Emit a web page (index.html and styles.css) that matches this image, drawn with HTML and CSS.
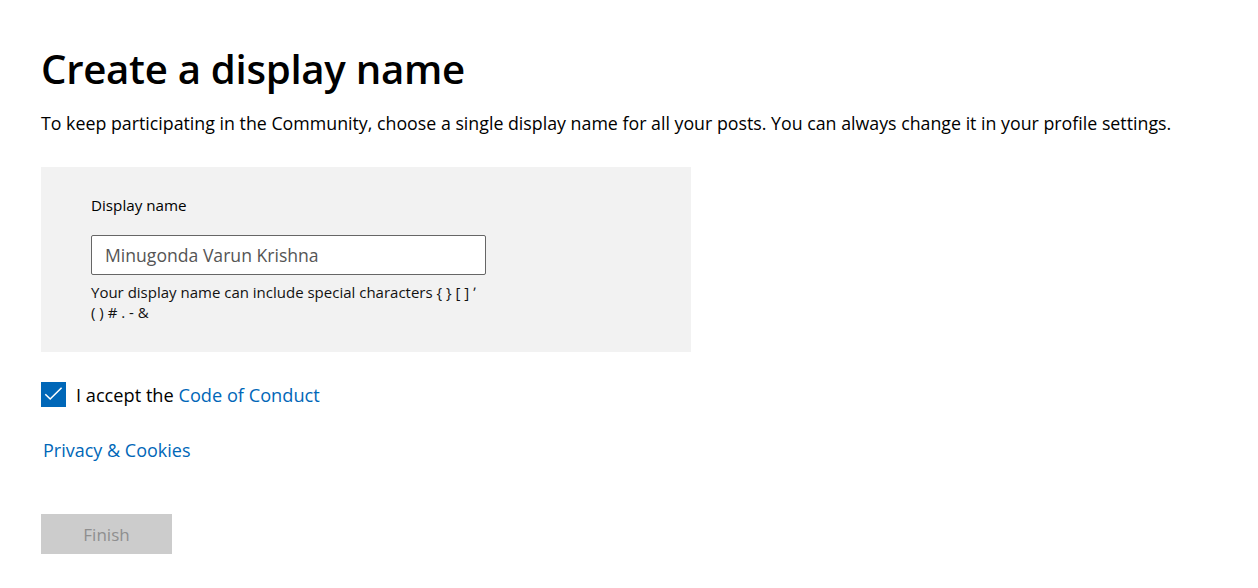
FILE: index.html
```html
<!DOCTYPE html>
<html lang="en">
<head>
<meta charset="utf-8">
<title>Create a display name</title>
<link rel="stylesheet" href="styles.css">
</head>
<body>
<main class="page">
  <h1 class="title">Create a display name</h1>
  <p class="intro">To keep participating in the Community, choose a single display name for all your posts. You can always change it in your profile settings.</p>
  <section class="panel">
    <label class="field-label" for="dn">Display name</label>
    <input class="field-input" id="dn" type="text" value="Minugonda Varun Krishna">
    <p class="field-help">Your display name can include special characters { } [ ] ʼ (&nbsp;) # . - &amp;</p>
  </section>
  <div class="accept">
    <span class="checkbox">
      <svg width="25" height="25" viewBox="0 0 25 25"><path d="M4.3 12.2 L9.2 17 L20.6 5.8" fill="none" stroke="#fff" stroke-width="1.6"/></svg>
    </span>
    <span class="accept-text">I accept the <a class="link" href="#">Code of Conduct</a></span>
  </div>
  <a class="link privacy" href="#">Privacy &amp; Cookies</a>
  <button class="finish" type="button" disabled>Finish</button>
</main>
</body>
</html>
```
FILE: styles.css
```css
html, body {
  margin: 0;
  padding: 0;
  background: #fff;
}
body {
  font-family: "Open Sans", "Noto Sans", sans-serif;
  color: #000;
}
.page {
  padding: 43px 41px 0 41px;
  display: flex;
  flex-direction: column;
  align-items: flex-start;
}
.title {
  margin: 0;
  font-size: 40.2px;
  font-weight: 600;
  line-height: 52px;
  letter-spacing: -0.3px;
}
.intro {
  margin: 16px 0 0 0;
  font-size: 17.8px;
  line-height: 24px;
}
.panel {
  margin-top: 32px;
  width: 650px;
  box-sizing: border-box;
  background: #f2f2f2;
  padding: 28px 50px 30px 50px;
  display: flex;
  flex-direction: column;
}
.field-label {
  font-size: 15.2px;
  line-height: 20px;
}
.field-input {
  margin-top: 20px;
  width: 395px;
  height: 40px;
  box-sizing: border-box;
  border: 1px solid #666;
  border-radius: 2px;
  background: #fff;
  padding: 0 13px;
  font-family: inherit;
  font-size: 17.6px;
  color: #555;
  outline: none;
}
.field-help {
  margin: 7px 0 0 0;
  width: 395px;
  font-size: 15px;
  line-height: 20px;
  color: #111;
}
.accept {
  margin-top: 30px;
  display: flex;
  align-items: center;
  gap: 10px;
}
.checkbox {
  width: 25px;
  height: 25px;
  background: #0067b8;
  display: flex;
}
.accept-text {
  font-size: 18.2px;
  line-height: 24px;
}
.link {
  color: #0067b8;
  text-decoration: none;
}
.privacy {
  margin: 31px 0 0 2px;
  font-size: 18px;
  line-height: 24px;
}
.finish {
  margin-top: 52px;
  width: 131px;
  height: 40px;
  border: none;
  background: #cccccc;
  color: #8f8f8f;
  font-family: inherit;
  font-size: 17px;
  padding: 0;
}
```
